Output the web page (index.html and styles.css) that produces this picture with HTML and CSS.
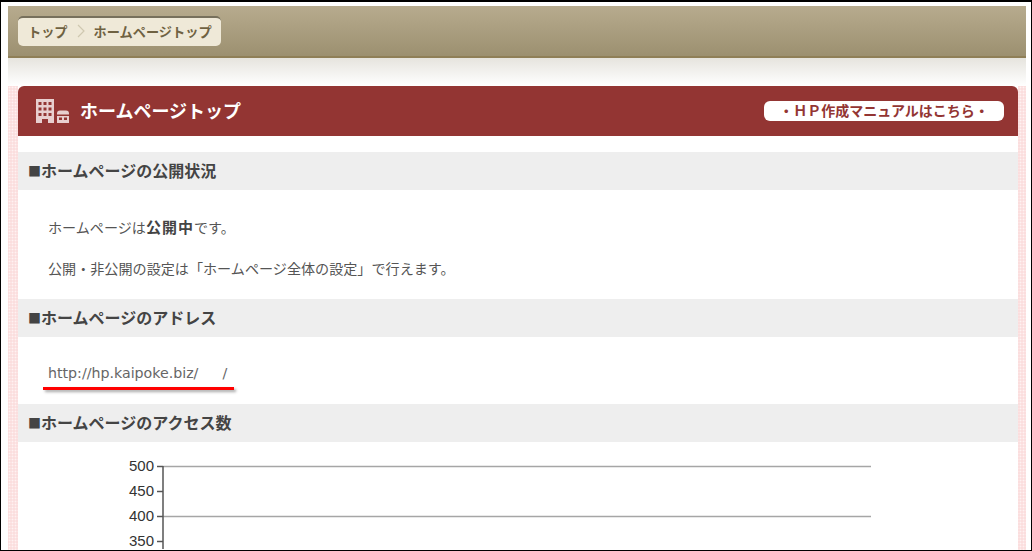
FILE: index.html
```html
<!DOCTYPE html>
<html lang="ja">
<head>
  <meta charset="UTF-8">
  <title>ホームページトップ</title>
  <link rel="stylesheet" href="styles.css">
</head>
<body>
<div class="frame">
  <div class="topbar">
    <div class="crumbs">
      <span>トップ</span>
      <svg class="crumb-sep" width="8" height="14" viewBox="0 0 8 14"><path d="M1 1l6 6-6 6" fill="none" stroke="#cfc8b0" stroke-width="1.2"/></svg>
      <span>ホームページトップ</span>
    </div>
  </div>
  <div class="fade"></div>
  <div class="page">
    <div class="content">
      <div class="title-bar">
        <svg class="title-icon" width="33" height="24" viewBox="0 0 33 24">
          <path fill="#e8cfcf" fill-rule="evenodd" d="M0 0h18v24h-6v-4H6v4H0zM2.500 3v3h3V3zM7.500 3v3h3V3zM12.500 3v3h3V3zM2.500 8.500v3h3v-3zM7.500 8.500v3h3v-3zM12.500 8.500v3h3v-3zM2.500 14v3h3v-3zM7.500 14v3h3v-3zM12.500 14v3h3v-3z"/>
          <path fill="#e8cfcf" fill-rule="evenodd" d="M21 14.500q0-3 3-3h6q3 0 3 3v1H21zM21 17h12v7H21zM23 18.500v2.500h3v-2.500zM28 18.500v2.500h3v-2.500z"/>
        </svg>
        <h1 class="title">ホームページトップ</h1>
        <a class="manual-btn">・ＨＰ作成マニュアルはこちら・</a>
      </div>

      <h2 class="sec-head first"><span class="sq">■</span>ホームページの公開状況</h2>
      <div class="status">
        <p>ホームページは<b>公開中</b>です。</p>
        <p>公開・非公開の設定は「ホームページ全体の設定」で行えます。</p>
      </div>

      <h2 class="sec-head"><span class="sq">■</span>ホームページのアドレス</h2>
      <div class="address">
        <span class="url">http://hp.kaipoke.biz/<span class="url-gap"></span>/</span>
        <div class="red-line"></div>
      </div>

      <h2 class="sec-head"><span class="sq">■</span>ホームページのアクセス数</h2>
      <svg class="chart" width="1000" height="107" viewBox="0 0 1000 107">
        <g stroke="#a6a6a6" stroke-width="1.500">
          <line x1="145" y1="24.500" x2="853" y2="24.500"/>
          <line x1="145" y1="74.500" x2="853" y2="74.500"/>
        </g>
        <g stroke="#555" stroke-width="1.500">
          <line x1="145" y1="24" x2="145" y2="107"/>
          <line x1="139" y1="24.500" x2="145" y2="24.500"/>
          <line x1="139" y1="49.500" x2="145" y2="49.500"/>
          <line x1="139" y1="74.500" x2="145" y2="74.500"/>
          <line x1="139" y1="99.500" x2="145" y2="99.500"/>
        </g>
        <g class="chart-label" text-anchor="end">
          <text x="136" y="29">500</text>
          <text x="136" y="54">450</text>
          <text x="136" y="79">400</text>
          <text x="136" y="104">350</text>
        </g>
      </svg>
    </div>
  </div>
</div>
</body>
</html>
```

FILE: styles.css
```css
html, body {
  margin: 0;
  padding: 0;
  background: #fff;
  font-family: "Noto Sans CJK JP", "Liberation Sans", sans-serif;
  color: #444;
}
.frame {
  box-sizing: border-box;
  width: 1032px;
  height: 551px;
  border: 1px solid #000;
  border-top-width: 2px;
  padding: 4px 5px 0 7px;
  overflow: hidden;
}
.topbar {
  box-sizing: border-box;
  height: 52px;
  padding: 10px 0 0 10px;
  background: linear-gradient(#b7ab8e, #9c9070);
  border-bottom: 2px solid #8f7f57;
}
.crumbs {
  display: inline-flex;
  align-items: center;
  box-sizing: border-box;
  height: 30px;
  padding: 0 9px 2px 10px;
  gap: 9px;
  background: #efe9d8;
  border-radius: 5px;
  border-top: 2px solid #77705c;
  font-size: 13.200px;
  font-weight: 700;
  color: #6f6242;
}
.fade {
  height: 28px;
  background: linear-gradient(#e6e4de, #fff);
}
.page {
  padding: 0 8px 0 10px;
  height: 470px;
  background-color: #fbdede;
  background-image: radial-gradient(#fff2f2 0.8px, transparent 1.100px);
  background-size: 3px 3px;
}
.content {
  background: #fff;
  height: 100%;
}
.title-bar {
  display: flex;
  align-items: center;
  height: 50px;
  padding: 0 14px 0 18px;
  background: #933533;
  border-radius: 6px 6px 0 0;
}
.title-icon {
  margin-right: 11px;
}
.title {
  flex: 1;
  margin: 0 0 2px;
  font-size: 18px;
  font-weight: 700;
  color: #fff;
}
.manual-btn {
  width: 240px;
  height: 20px;
  line-height: 19px;
  text-align: center;
  background: #fff;
  border-radius: 6px;
  font-size: 14px;
  font-weight: 700;
  color: #933533;
}
.sec-head {
  display: flex;
  align-items: center;
  box-sizing: border-box;
  height: 38px;
  margin: 0;
  padding: 0 0 2px 10px;
  background: #eee;
  font-size: 16px;
  font-weight: 700;
  color: #444;
}
.sec-head.first {
  margin-top: 16px;
}
.sq {
  font-size: 13px;
  width: 13px;
  overflow: hidden;
}
.status {
  height: 109px;
  padding: 0 30px;
  font-size: 14.100px;
  color: #555;
}
.status p {
  margin: 0;
  padding-top: 27px;
  line-height: 20px;
}
.status p + p {
  padding-top: 21px;
}
.status b {
  font-size: 15px;
  letter-spacing: 1px;
  color: #444;
}
.address {
  height: 67px;
  padding: 26px 0 0 30px;
  box-sizing: border-box;
}
.url {
  display: block;
  font-family: "DejaVu Sans", sans-serif;
  font-size: 14.200px;
  line-height: 20px;
  color: #666;
}
.url-gap {
  display: inline-block;
  width: 24px;
}
.red-line {
  width: 191px;
  height: 3px;
  margin: 4px 0 0 -5px;
  background: #f00;
  box-shadow: 2px 2px 3px rgba(0, 0, 0, 0.35);
}
.chart {
  display: block;
}
.chart-label {
  font-family: "Liberation Sans", sans-serif;
  font-size: 15px;
  fill: #333;
}
```
